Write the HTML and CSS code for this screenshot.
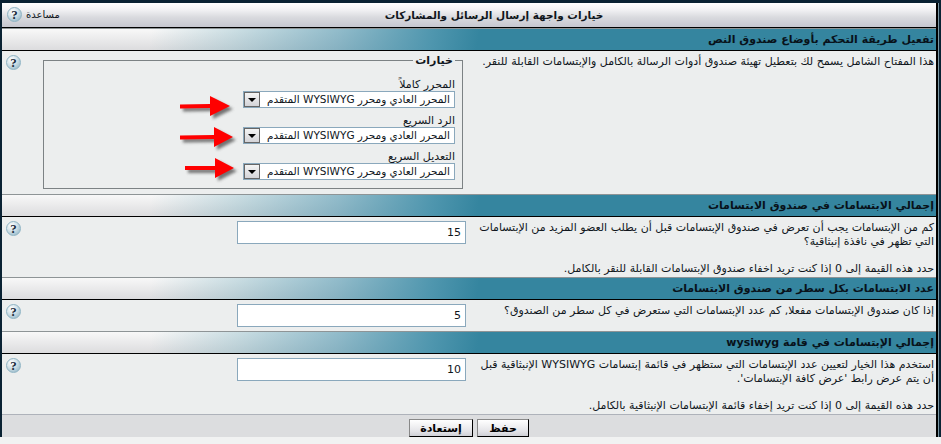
FILE: index.html
```html
<!DOCTYPE html>
<html lang="ar" dir="rtl">

<head>
    <meta charset="UTF-8">
    <title>خيارات واجهة إرسال الرسائل والمشاركات</title>
    <link rel="stylesheet" href="styles.css">
</head>

<body>

    <div class="frame">
        <div class="panel">

            <div class="title-bar">
                <span class="title">خيارات واجهة إرسال الرسائل والمشاركات</span>
                <span class="title-help">مساعدة <span class="help">?</span></span>
            </div>

            <div class="head">تفعيل طريقة التحكم بأوضاع صندوق النص</div>
            <div class="row row-editor">
                <div class="desc">هذا المفتاح الشامل يسمح لك بتعطيل تهيئة صندوق أدوات الرسالة بالكامل والإبتسامات القابلة للنقر.</div>
                <div class="control">
                    <fieldset class="options">
                        <legend>خيارات</legend>
                        <label class="opt-label">المحرر كاملاً</label>
                        <div class="fake-select"><span class="sel-text">المحرر العادي ومحرر WYSIWYG المتقدم</span><span class="sel-btn"></span></div>
                        <label class="opt-label">الرد السريع</label>
                        <div class="fake-select"><span class="sel-text">المحرر العادي ومحرر WYSIWYG المتقدم</span><span class="sel-btn"></span></div>
                        <label class="opt-label">التعديل السريع</label>
                        <div class="fake-select"><span class="sel-text">المحرر العادي ومحرر WYSIWYG المتقدم</span><span class="sel-btn"></span></div>

                        <!-- red arrows painted on top of the screenshot -->
                        <svg class="arrows" width="70" height="100" viewBox="0 0 70 100">
                            <defs>
                                <filter id="blurry" x="-20%" y="-40%" width="140%" height="180%">
                                    <feGaussianBlur stdDeviation="1.5" />
                                </filter>
                                <path id="arrow1" d="M0 8.5 L30 8 L30 0 L50 10 L30 20 L30 12 L0 12.5 Z" />
                                <path id="arrow2" d="M0 8.5 L34 8 L34 0 L53 10 L34 20 L34 12 L0 12.5 Z" />
                                <path id="arrow3" d="M0 8 L30 8 L30 0 L49 10 L30 20 L30 12 L0 12 Z" />
                            </defs>
                            <g fill="#555" filter="url(#blurry)" opacity="0.8">
                                <use href="#arrow1" x="3" y="7" />
                                <use href="#arrow2" x="3" y="38" />
                                <use href="#arrow3" x="8" y="69" />
                            </g>
                            <g fill="#f00">
                                <use href="#arrow1" x="0" y="4" />
                                <use href="#arrow2" x="0" y="35" />
                                <use href="#arrow3" x="5" y="66" />
                            </g>
                        </svg>
                    </fieldset>
                </div>
                <span class="help">?</span>
            </div>

            <div class="head">إجمالي الابتسامات في صندوق الابتسامات</div>
            <div class="row">
                <div class="desc">كم من الإبتسامات يجب أن تعرض في صندوق الإبتسامات قبل أن يطلب العضو المزيد من الإبتسامات التي تظهر في نافذة إنبثاقية؟<br><br>حدد هذه القيمة إلى 0 إذا كنت تريد اخفاء صندوق الإبتسامات القابلة للنقر بالكامل.</div>
                <div class="control"><input class="num" type="text" value="15"></div>
                <span class="help">?</span>
            </div>

            <div class="head">عدد الابتسامات بكل سطر من صندوق الابتسامات</div>
            <div class="row">
                <div class="desc">إذا كان صندوق الإبتسامات مفعلا, كم عدد الإبتسامات التي ستعرض في كل سطر من الصندوق؟</div>
                <div class="control"><input class="num" type="text" value="5"></div>
                <span class="help">?</span>
            </div>

            <div class="head">إجمالي الإبتسامات في قامة wysiwyg</div>
            <div class="row">
                <div class="desc">استخدم هذا الخيار لتعيين عدد الإبتسامات التي ستظهر في قائمة إبتسامات WYSIWYG الإنبثاقية قبل أن يتم عرض رابط 'عرض كافة الإبتسامات'.<br><br>حدد هذه القيمة إلى 0 إذا كنت تريد إخفاء قائمة الإبتسامات الإنبثاقية بالكامل.</div>
                <div class="control"><input class="num" type="text" value="10"></div>
                <span class="help">?</span>
            </div>

            <div class="foot">
                <button class="btn save">حفظ</button>
                <button class="btn reset">إستعادة</button>
            </div>

        </div>
    </div>

</body>

</html>
```

FILE: styles.css
```css
body {
  margin: 0;
  font-family: "DejaVu Sans", "Liberation Sans", sans-serif;
  font-size: 11px;
  color: #10161c;
  background-color: #f1f2f2;
}

.frame {
  background-color: #7a96a2;
  border-top: 3px solid #0a2233;
  border-left: 2px solid #0a2233;
  border-right: 2px solid #0a2233;
  padding-right: 1px;
}

.panel {
  background-color: #eceeee;
  border-right: 2px solid #000;
}

/* top bar */
.title-bar {
  display: flex;
  justify-content: center;
  align-items: center;
  position: relative;
  height: 24px;
  border-bottom: 1px solid #000;
  background: linear-gradient(to bottom, #fff 0%, #f4f4f6 25%, #d9dade 60%, #c6c7d0 100%);
  font-size: 10.5px;
  font-weight: bold;
}

.title {
  padding-left: 50px;
}

.title-help {
  position: absolute;
  left: 5px;
  top: 4px;
  display: flex;
  align-items: center;
  gap: 4px;
  font-weight: normal;
  font-size: 10px;
}

/* section headers */
.head {
  height: 21px;
  line-height: 21px;
  padding-right: 2px;
  font-size: 11px;
  font-weight: bold;
  color: #08121a;
  border-top: 1px solid #8e9496;
  border-bottom: 1px solid #000;
  background:
    linear-gradient(100deg, rgba(53, 133, 159, 0) 16%, rgba(120, 175, 190, 0.35) 25%, rgba(90, 155, 178, 0.65) 36%, #4f96ae 46%, #35859f 51%, #35859f 100%),
    linear-gradient(to bottom, #f8f8f8, #dcdcde);
}

.row {
  display: grid;
  grid-template-columns: 470px 1fr 25px;
  min-height: 25px;
  padding: 4px 0 2px;
  line-height: 13.5px;
}

.row-editor {
  height: 137px;
}

.desc {
  padding-right: 2px;
  padding-left: 4px;
}

.control {
  display: flex;
}

.num {
  width: 229px;
  height: 23px;
  box-sizing: border-box;
  padding: 0 4px;
  border: 1px solid #8aa8bc;
  background: #fff;
  color: #10161c;
  font-family: "DejaVu Sans", sans-serif;
  font-size: 11px;
  text-align: right;
  outline: none;
}

.help {
  width: 13px;
  height: 13px;
  margin-left: 4px;
  justify-self: end;
  display: flex;
  align-items: center;
  justify-content: center;
  border-radius: 50%;
  border: 1px solid #8fb4c4;
  background: radial-gradient(circle at 35% 28%, #fff 0%, #d6e4ea 40%, #86adc0 100%);
  color: #1c2c3c;
  font-family: "Liberation Serif", serif;
  font-size: 13px;
  font-weight: bold;
  line-height: 1;
}

.title-help .help {
  margin-left: 0;
}

/* options box */
.options {
  position: relative;
  box-sizing: border-box;
  width: 420px;
  height: 134px;
  margin: 0 3px 0 0;
  padding: 6px 7px 0 0;
  border: 1px solid #7c8284;
}

.options legend {
  font-weight: bold;
  padding: 0 2px;
  margin: 0;
  line-height: 11px;
}

.opt-label {
  display: block;
  line-height: 13px;
  height: 19px;
  padding-top: 6px;
  box-sizing: border-box;
}

.fake-select {
  display: flex;
  justify-content: space-between;
  align-items: center;
  box-sizing: border-box;
  width: 212px;
  height: 17px;
  border: 1px solid #8aa8bc;
  background: #fff;
  padding: 0 4px 0 0;
}

.sel-text {
  white-space: nowrap;
  font-size: 10.5px;
}

.sel-btn {
  position: relative;
  flex: none;
  width: 16px;
  height: 15px;
  box-sizing: border-box;
  border: 1px solid #666;
  background: linear-gradient(to bottom, #f4f4f4, #d4d4d8);
}

.sel-btn::after {
  content: "";
  position: absolute;
  left: 3px;
  top: 5px;
  border-left: 4px solid transparent;
  border-right: 4px solid transparent;
  border-top: 4px solid #000;
}

.arrows {
  position: absolute;
  left: 136px;
  top: 26px;
}

/* bottom buttons */
.foot {
  display: flex;
  justify-content: center;
  gap: 4px;
  height: 23px;
  padding-top: 4px;
  box-sizing: border-box;
  background-color: #dcdddf;
  border-top: 1px solid #aeb2ba;
}

.btn {
  height: 18px;
  padding: 0;
  box-sizing: border-box;
  border: 1px solid #000;
  border-top-color: #888;
  border-left-color: #888;
  background: linear-gradient(to bottom, #fff, #e4e4e8 70%, #cfd0d6);
  color: #000;
  font-family: "DejaVu Sans", sans-serif;
  font-size: 11px;
  font-weight: bold;
  line-height: 13px;
}

.save {
  width: 52px;
}

.reset {
  width: 64px;
}
```
